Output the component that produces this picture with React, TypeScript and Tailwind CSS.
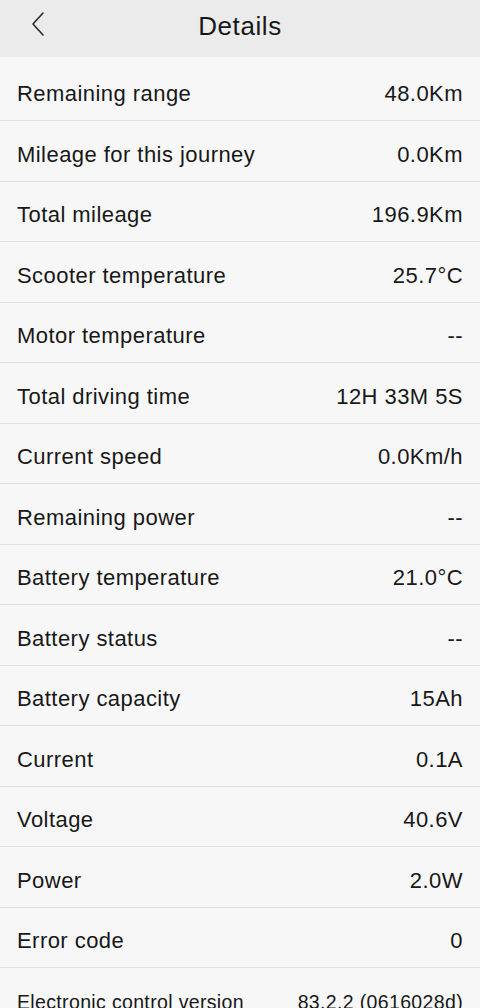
const rows: [string, string][] = [
  ["Remaining range", "48.0Km"],
  ["Mileage for this journey", "0.0Km"],
  ["Total mileage", "196.9Km"],
  ["Scooter temperature", "25.7°C"],
  ["Motor temperature", "--"],
  ["Total driving time", "12H 33M 5S"],
  ["Current speed", "0.0Km/h"],
  ["Remaining power", "--"],
  ["Battery temperature", "21.0°C"],
  ["Battery status", "--"],
  ["Battery capacity", "15Ah"],
  ["Current", "0.1A"],
  ["Voltage", "40.6V"],
  ["Power", "2.0W"],
  ["Error code", "0"],
];

export default function App() {
  return (
    <div className="w-[480px] h-[1008px] overflow-hidden bg-[#f7f7f7] text-[#181818] font-['Liberation_Sans',Arial,sans-serif]">
      {/* header */}
      <div className="relative flex h-[57px] items-center justify-center bg-[#ebebeb]">
        <button className="absolute left-[27px] top-[7px] p-1">
          <svg width="14" height="26" viewBox="0 0 14 26" fill="none">
            <path d="M12 2 L2 13 L12 24" stroke="#2a2a2a" strokeWidth="1.6" strokeLinecap="round" strokeLinejoin="round" />
          </svg>
        </button>
        <h1 className="text-[26px] tracking-[0.6px] leading-none pb-[6px]">Details</h1>
      </div>

      <div className="pt-[3.5px]">
        {rows.map(([label, value]) => (
          <div
            key={label}
            className="flex h-[60.5px] items-center justify-between border-b border-[#e0e0e0] px-[17px] pt-[8px] text-[22px] tracking-[0.45px] leading-none"
          >
            <span>{label}</span>
            <span>{value}</span>
          </div>
        ))}
        {/* last row uses a smaller size so both texts fit */}
        <div className="flex h-[60.5px] items-center justify-between px-[17px] pt-[8px] text-[19.5px] tracking-[0.35px] leading-none">
          <span>Electronic control version</span>
          <span>83.2.2 (0616028d)</span>
        </div>
      </div>
    </div>
  );
}
